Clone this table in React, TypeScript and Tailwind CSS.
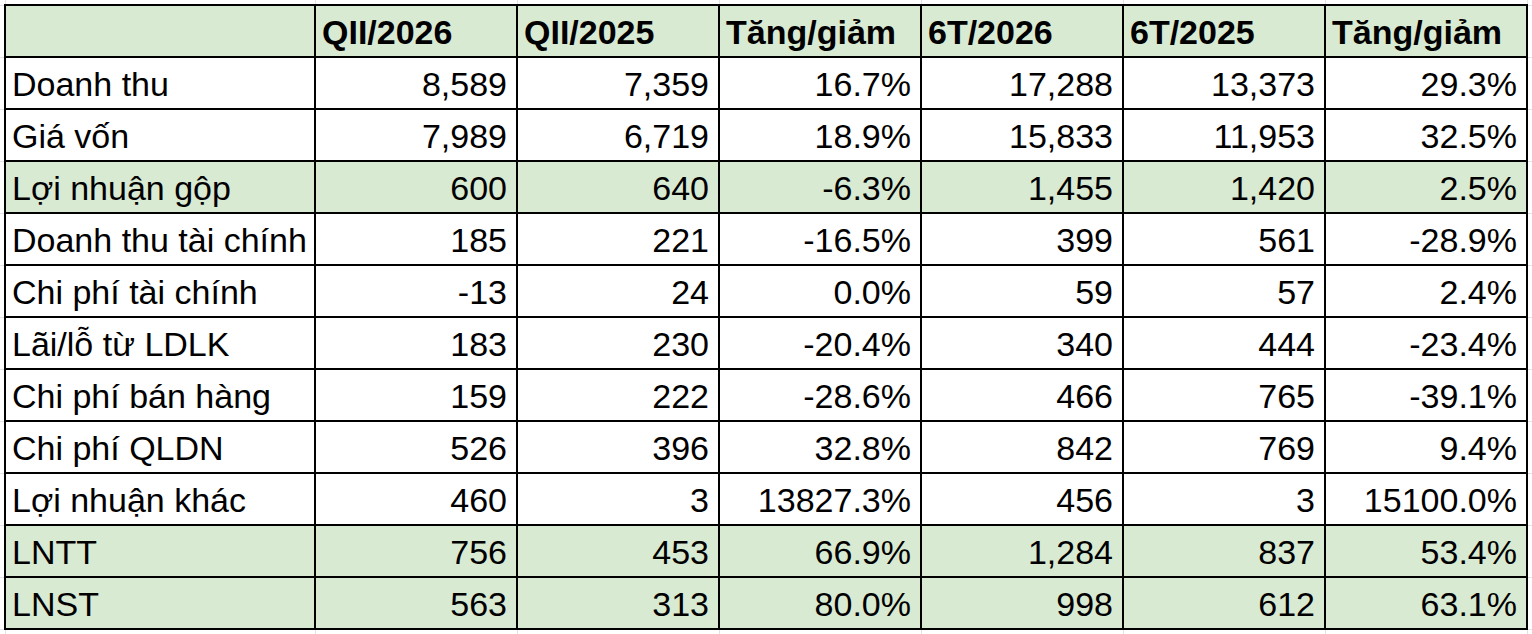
const rows: { label: string; v: string[]; hl?: boolean }[] = [
  { label: "Doanh thu", v: ["8,589", "7,359", "16.7%", "17,288", "13,373", "29.3%"] },
  { label: "Giá vốn", v: ["7,989", "6,719", "18.9%", "15,833", "11,953", "32.5%"] },
  { label: "Lợi nhuận gộp", v: ["600", "640", "-6.3%", "1,455", "1,420", "2.5%"], hl: true },
  { label: "Doanh thu tài chính", v: ["185", "221", "-16.5%", "399", "561", "-28.9%"] },
  { label: "Chi phí tài chính", v: ["-13", "24", "0.0%", "59", "57", "2.4%"] },
  { label: "Lãi/lỗ từ LDLK", v: ["183", "230", "-20.4%", "340", "444", "-23.4%"] },
  { label: "Chi phí bán hàng", v: ["159", "222", "-28.6%", "466", "765", "-39.1%"] },
  { label: "Chi phí QLDN", v: ["526", "396", "32.8%", "842", "769", "9.4%"] },
  { label: "Lợi nhuận khác", v: ["460", "3", "13827.3%", "456", "3", "15100.0%"] },
  { label: "LNTT", v: ["756", "453", "66.9%", "1,284", "837", "53.4%"], hl: true },
  { label: "LNST", v: ["563", "313", "80.0%", "998", "612", "63.1%"], hl: true },
];

const heads = ["QII/2026", "QII/2025", "Tăng/giảm", "6T/2026", "6T/2025", "Tăng/giảm"];

const grid = "border border-[#e3e3e3]";
const cell = "border-2 border-black px-[6px] pt-[1px] align-middle whitespace-nowrap overflow-hidden";

export default function App() {
  return (
    <div className="h-[634px] w-[1532px] overflow-hidden bg-white font-['Liberation_Sans',Arial,sans-serif] text-[34px] leading-none text-black">
      <table className="w-[1532px] table-fixed border-collapse">
        <colgroup>
          <col className="w-[5px]" />
          <col className="w-[310px]" />
          {heads.map((_, i) => (
            <col key={i} className="w-[202px]" />
          ))}
          <col className="w-[5px]" />
        </colgroup>
        <tbody>
          {/* top gutter */}
          <tr className="h-[5px]">
            <td className="border-0" />
            <td className={`${grid} border-t-0`} />
            {heads.map((_, i) => (
              <td key={i} className={`${grid} border-t-0`} />
            ))}
            <td className="border-0" />
          </tr>

          {/* header */}
          <tr className="h-[52px]">
            <td className={`${grid} border-l-0`} />
            <td className={`${cell} bg-[#d9ead3]`} />
            {heads.map((h, i) => (
              <td key={i} className={`${cell} bg-[#d9ead3] text-left font-bold`}>
                {h}
              </td>
            ))}
            <td className={`${grid} border-r-0`} />
          </tr>

          {rows.map((r) => (
            <tr key={r.label} className="h-[52px]">
              <td className={`${grid} border-l-0`} />
              <td className={`${cell} text-left ${r.hl ? "bg-[#d9ead3]" : "bg-white"}`}>{r.label}</td>
              {r.v.map((x, i) => (
                <td key={i} className={`${cell} pr-[9px] text-right ${r.hl ? "bg-[#d9ead3]" : "bg-white"}`}>
                  {x}
                </td>
              ))}
              <td className={`${grid} border-r-0`} />
            </tr>
          ))}

          {/* bottom gutter */}
          <tr className="h-[6px]">
            <td className="border-0" />
            <td className={`${grid} border-b-0`} />
            {heads.map((_, i) => (
              <td key={i} className={`${grid} border-b-0`} />
            ))}
            <td className="border-0" />
          </tr>
        </tbody>
      </table>
    </div>
  );
}
